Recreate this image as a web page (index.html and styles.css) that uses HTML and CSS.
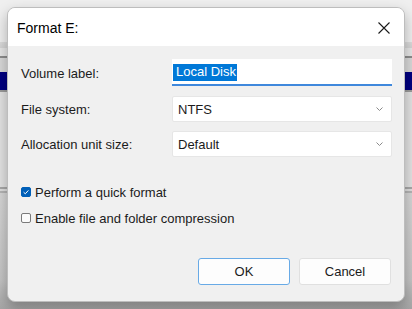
FILE: index.html
```html
<!DOCTYPE html>
<html lang="en">

<head>
    <meta charset="UTF-8">
    <meta name="viewport" content="width=device-width, initial-scale=1.0">
    <title>Format E:</title>
    <link rel="stylesheet" href="styles.css">
</head>

<body>
    <div class="dialog">
        <div class="titlebar">
            <span class="title">Format E:</span>
            <svg class="close" width="12" height="12" viewBox="0 0 12 12">
                <path d="M0.5 0.5 L11.5 11.5 M11.5 0.5 L0.5 11.5" stroke="#1a1a1a" stroke-width="1.1" fill="none" />
            </svg>
        </div>

        <div class="content">
            <div class="form">
                <label class="label">Volume label:</label>
                <div class="input"><span class="selected">Local Disk</span></div>

                <label class="label">File system:</label>
                <div class="select">
                    <span>NTFS</span>
                    <svg class="chevron" width="7" height="4" viewBox="0 0 7 4">
                        <path d="M0.5 0.5 L3.5 3.5 L6.5 0.5" stroke="#8a8a8a" stroke-width="1" fill="none" />
                    </svg>
                </div>

                <label class="label">Allocation unit size:</label>
                <div class="select">
                    <span>Default</span>
                    <svg class="chevron" width="7" height="4" viewBox="0 0 7 4">
                        <path d="M0.5 0.5 L3.5 3.5 L6.5 0.5" stroke="#8a8a8a" stroke-width="1" fill="none" />
                    </svg>
                </div>
            </div>

            <div class="options">
                <div class="check">
                    <span class="box checked">
                        <svg width="10" height="10" viewBox="0 0 10 10">
                            <path d="M2.6 5.2 L4.3 6.8 L7.4 3.4" stroke="#fff" stroke-width="1" fill="none" />
                        </svg>
                    </span>
                    <span>Perform a quick format</span>
                </div>
                <div class="check">
                    <span class="box"></span>
                    <span>Enable file and folder compression</span>
                </div>
            </div>

            <div class="buttons">
                <button class="btn primary">OK</button>
                <button class="btn">Cancel</button>
            </div>
        </div>
    </div>
</body>

</html>
```

FILE: styles.css
```css
body {
    margin: 0;
    height: 309px;
    overflow: hidden;
    font-family: "Liberation Sans", Arial, sans-serif;
    font-size: 13px;
    color: #1b1b1b;
    /* 对话框后面的窗口 */
    background: linear-gradient(to bottom,
            #efefef 0, #efefef 42px,
            #dcdcdc 42px, #d4d4d4 48px,
            #e6e6e6 48px, #e6e6e6 56px,
            #8c8c8c 56px, #8c8c8c 58px,
            #d8d8d8 58px, #d8d8d8 72px,
            #000080 72px, #000080 90px,
            #9a9a9a 90px, #9a9a9a 92px,
            #e2e2e2 92px, #e2e2e2 187px,
            #a8a8a8 187px, #a8a8a8 189px,
            #dedede 189px, #dedede 191px,
            #b4b4b4 191px, #b4b4b4 193px,
            #d6d6d6 193px, #c4c4c4 280px,
            #a6a6a6 309px);
}

.dialog {
    margin: 7px;
    width: 398px;
    height: 295px;
    box-sizing: border-box;
    border: 1px solid #bdbdbd;
    border-radius: 8px;
    background: #f0f0f0;
    overflow: hidden;
    box-shadow: 0 6px 14px rgba(0, 0, 0, 0.28);
    display: flex;
    flex-direction: column;
}

.titlebar {
    height: 38px;
    background: #fff;
    display: flex;
    align-items: center;
    justify-content: space-between;
    padding: 0 14px 0 9px;
}

.title {
    font-size: 14px;
    color: #000;
    margin-top: 1px;
}

.close {
    margin-top: 2px;
}

.content {
    flex: 1;
    padding: 13px 12px 0 13px;
    display: flex;
    flex-direction: column;
}

.form {
    display: grid;
    grid-template-columns: 151px 220px;
    row-gap: 9px;
    align-items: center;
}

.input {
    height: 27px;
    box-sizing: border-box;
    background: #fff;
    border-bottom: 2px solid #3f88dc;
    padding: 2px 0 0 1px;
    display: flex;
    align-items: center;
    margin-bottom: 1px;
}

.selected {
    background: #0078d7;
    color: #fff;
    padding: 1px 1px 2px 3px;
    line-height: 14px;
}

.select {
    height: 26px;
    box-sizing: border-box;
    background: #fff;
    border: 1px solid #e6e6e6;
    border-radius: 2px;
    padding: 0 8px 0 5px;
    display: flex;
    align-items: center;
    justify-content: space-between;
}

.options {
    margin-top: 28px;
    display: flex;
    flex-direction: column;
    gap: 12px;
}

.check {
    display: flex;
    align-items: center;
    gap: 4px;
    height: 14px;
}

.box {
    width: 10px;
    height: 10px;
    box-sizing: border-box;
    border: 1px solid #7a7a7a;
    border-radius: 2px;
    background: #fbfbfb;
    display: flex;
}

.box.checked {
    background: #005fb8;
    border-color: #005fb8;
}

.box.checked svg {
    margin: -1px;
}

.buttons {
    margin-top: 33px;
    display: flex;
    justify-content: flex-end;
    gap: 9px;
    padding-right: 1px;
}

.btn {
    width: 92px;
    height: 27px;
    font-family: inherit;
    font-size: 13px;
    color: #1b1b1b;
    background: #fdfdfd;
    border: 1px solid #e0e0e0;
    border-radius: 3px;
}

.btn.primary {
    border: 1.5px solid #68aae6;
}
```
